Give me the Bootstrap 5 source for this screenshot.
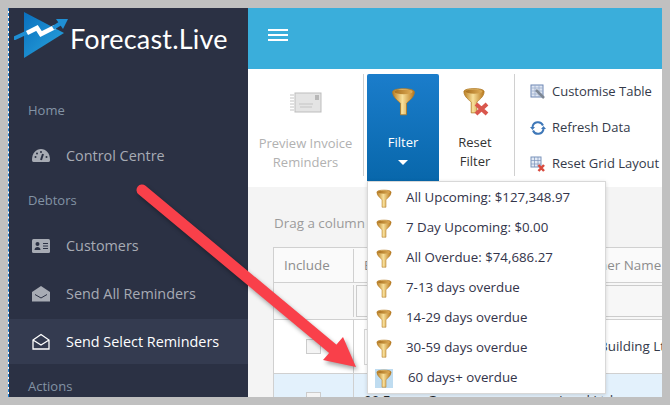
<!DOCTYPE html>
<html lang="en">
<head>
  <meta charset="UTF-8" />
  <title>Forecast.Live</title>
  <link href="https://cdn.jsdelivr.net/npm/bootstrap@5.3.3/dist/css/bootstrap.min.css" rel="stylesheet" />
  <style>
    html, body { width: 670px; height: 405px; overflow: hidden; }
    body { background: #c0c0c0; padding: 8px; font-family: "Open Sans", sans-serif; }
    .app-frame { width: 654px; height: 389px; overflow: hidden; position: relative; background: #fff; }
    .side-bar { width: 240px; flex: none; background: #2b3144; background-clip: padding-box; border-left: 1px dashed #1a7fd4; color: #a7abb4; }
    .brand-row { height: 80px; padding: 3px 0 0 5px; }
    .brand-name { color: #fff; font-family: "Lato", sans-serif; font-size: 27px; line-height: 1; margin-top: 14px; letter-spacing: .2px; }
    .nav-head { height: 45px; font-size: 13px; color: #8393a5; padding-left: 19px; display: flex; align-items: center; }
    .nav-entry { height: 45px; font-size: 14.4px; padding-left: 23px; display: flex; align-items: center; gap: 16px; color: #a7abb4; }
    .nav-entry svg { width: 18px; height: 18px; flex: none; }
    .nav-entry.current { background: #343b50; color: #fff; }
    .nav-entry.tall-row { height: 51px; }
    .top-strip { height: 61px; background: #3aaedb; padding: 21px 0 0 20px; }
    .burger { width: 20px; height: 12px; border-top: 2px solid #fff; border-bottom: 2px solid #fff; position: relative; }
    .burger::after { content: ""; position: absolute; left: 0; right: 0; top: 3px; height: 2px; background: #fff; }
    .tool-strip { height: 118px; background: #fff; padding-top: 5px; flex: none; }
    .tool-btn { font-size: 13px; line-height: 19px; text-align: center; white-space: nowrap; }
    .tool-btn svg { display: block; margin: 0 auto; }
    .tool-btn span { display: block; margin-top: 17px; }
    .preview-btn { width: 116px; color: #b1b1b1; padding-top: 18px; border-right: 1px solid #d0d0d0; height: 102px; }
    .preview-btn span { margin-top: 20px; }
    .filter-btn { width: 72px; height: 107px; margin-left: 3px; background: linear-gradient(#1b7dcb, #0867ab); color: #fff; padding-top: 13px; border-radius: 2px 2px 0 0; }
    .down-tip { width: 0; height: 0; margin: 8px auto 0; border-left: 5px solid transparent; border-right: 5px solid transparent; border-top: 5px solid #fff; }
    .reset-btn { width: 72px; color: #333; padding-top: 13px; }
    .link-stack { border-left: 1px solid #d0d0d0; height: 102px; padding-left: 15px; margin-left: 3px; font-size: 13px; color: #343a4a; white-space: nowrap; }
    .link-stack > div { height: 36px; display: flex; align-items: center; gap: 6px; }
    .link-stack svg { width: 16px; height: 16px; flex: none; }
    .grid-zone { flex: 1; background: #f4f4f4; position: relative; overflow: hidden; }
    .drag-hint { font-size: 13.4px; color: #9b9b9b; position: absolute; left: 26px; top: 26px; white-space: nowrap; }
    .data-grid { position: absolute; left: 25px; top: 60px; width: 500px; background: #fff; border-top: 1px solid #d0d0d0; border-left: 1px solid #d0d0d0; font-size: 13.4px; }
    .grid-row { display: flex; border-bottom: 1px solid #d0d0d0; white-space: nowrap; overflow: hidden; }
    .cell-a { width: 80px; flex: none; border-right: 1px solid #d0d0d0; display: flex; align-items: center; justify-content: center; }
    .cell-b { width: 205px; flex: none; padding-left: 10px; display: flex; align-items: center; }
    .cell-c { flex: 1; color: #343a4a; display: flex; align-items: center; }
    .head-row { height: 35px; background: #fafafa; color: #8d8d8d; padding-top: 1px; }
    .head-row .cell-a { justify-content: flex-start; padding-left: 10px; }
    .head-row .cell-c { color: #8d8d8d; }
    .filter-row { height: 37px; background: #f7f7f7; padding: 2px 0; }
    .filter-row .cell-b { flex: 1; padding-left: 2px; }
    .input-box { height: 32px; width: 100%; background: #f7f7f7; border: 1px solid #ccc; border-right: 0; }
    .tick-box { width: 15px; height: 15px; background: #f4f4f4; border: 1px solid #ccc; }
    .body-row { height: 54px; }
    .ref-box { width: 60px; height: 36px; border: 1px solid #d8d8d8; }
    .pick-row { height: 40px; background: #e3f1fc; align-items: flex-start; }
    .pick-row > div { height: 40px; padding-top: 16px; align-items: flex-start; }
    .pick-row .cell-a { padding-top: 18px; }
    .drop-menu { position: absolute; left: 359px; top: 173px; width: 239px; height: 213px; background: #fff; border: 1px solid #d8d8d8; box-shadow: 0 1px 4px rgba(0,0,0,.15); padding: 1px 0 0 7px; color: #33344a; font-size: 13.3px; z-index: 2; }
    .drop-entry { height: 30px; display: flex; align-items: center; gap: 13px; white-space: nowrap; }
    .drop-entry svg { width: 18px; height: 19px; flex: none; }
    .drop-entry.hot { gap: 15px; }
    .drop-entry.hot svg { background: #bfdcf0; }
    .big-arrow { position: absolute; left: -8px; top: -8px; z-index: 3; filter: drop-shadow(2px 3px 2px rgba(0,0,0,.35)); }
  </style>
</head>
<body>
  <svg width="0" height="0" class="position-absolute">
    <defs>
      <linearGradient id="gold" x1="0" x2="1" y1="0" y2="0">
        <stop offset="0" stop-color="#b97c20"/><stop offset=".45" stop-color="#f8e09a"/><stop offset="1" stop-color="#b8761a"/>
      </linearGradient>
      <linearGradient id="goldIn" x1="0" x2="1" y1="0" y2="0">
        <stop offset="0" stop-color="#a8701f"/><stop offset="1" stop-color="#e0ae58"/>
      </linearGradient>
      <linearGradient id="logoBlue" x1="0" x2="1" y1="0" y2="1">
        <stop offset="0" stop-color="#0a6fbd"/><stop offset="1" stop-color="#2aa6df"/>
      </linearGradient>
      <symbol id="funnel" viewBox="0 0 20 24">
        <path d="M1 4C1 .5 19 .5 19 4 19 9 13.500 12 12.500 13.500V23H7.500V13.500C6.500 12 1 9 1 4Z" fill="url(#gold)" stroke="#b07a28" stroke-width=".7"/>
        <ellipse cx="10" cy="4" rx="7.500" ry="2" fill="url(#goldIn)"/>
      </symbol>
    </defs>
  </svg>
  <div class="app-frame d-flex">
    <aside class="side-bar">
      <div class="brand-row d-flex">
        <svg width="56" height="50" viewBox="0 0 56 50">
          <path d="M10 1 50 22 10 47Z" fill="url(#logoBlue)"/>
          <path d="M1 27 14 21" fill="none" stroke="#1f8fd4" stroke-width="4" stroke-linecap="round"/>
          <path d="M13 22 23 17 27 23 41 16" fill="none" stroke="#fff" stroke-width="4.500"/>
          <path d="M39 17 47 12" fill="none" stroke="#1f8fd4" stroke-width="4"/>
          <path d="M42 8 54 8 49 18Z" fill="#1f8fd4"/>
        </svg>
        <div class="brand-name">Forecast.Live</div>
      </div>
      <div class="nav-head">Home</div>
      <div class="nav-entry">
        <svg viewBox="0 0 18 18"><path d="M0 13C0 6 4 2 9 2s9 4 9 11c0 1-.5 2-1.500 2H1.500C.5 15 0 14 0 13Z" fill="#a7abb4"/><path d="M9 13 11 7" stroke="#2b3144" stroke-width="2"/><g fill="#2b3144"><circle cx="3.500" cy="10" r="1"/><circle cx="5" cy="6.500" r="1"/><circle cx="9" cy="5" r="1"/><circle cx="14.500" cy="10" r="1"/></g></svg>
        <span>Control Centre</span>
      </div>
      <div class="nav-head">Debtors</div>
      <div class="nav-entry">
        <svg viewBox="0 0 18 18"><rect x="0" y="2" width="18" height="14" rx="1.500" fill="#a7abb4"/><circle cx="5.500" cy="7" r="2" fill="#2b3144"/><path d="M2.500 13c0-4 6-4 6 0Z" fill="#2b3144"/><path d="M11 6.500h5M11 9h5M11 11.500h5" stroke="#2b3144" stroke-width="1"/></svg>
        <span>Customers</span>
      </div>
      <div class="nav-entry tall-row">
        <svg viewBox="0 0 18 18"><path d="M0 7 9 1l9 6v9.500H0Z" fill="#a7abb4"/><path d="M3 9.500 9 13l6-3.500" fill="none" stroke="#2b3144" stroke-width="1"/></svg>
        <span>Send All Reminders</span>
      </div>
      <div class="nav-entry current">
        <svg viewBox="0 0 18 18"><path d="M1 7 9 1.500 17 7v9H1ZM1 7l8 5 8-5" fill="none" stroke="#fff" stroke-width="1.300"/></svg>
        <span>Send Select Reminders</span>
      </div>
      <div class="nav-head">Actions</div>
    </aside>
    <main class="flex-fill d-flex flex-column">
      <div class="top-strip"><div class="burger"></div></div>
      <div class="tool-strip d-flex">
        <div class="tool-btn preview-btn">
          <svg width="32" height="22" viewBox="0 0 32 22"><rect x="5" y="1" width="26" height="19" fill="#e4e4e4" stroke="#bdbdbd"/><rect x="25" y="3" width="4" height="5" fill="#b8b8b8"/><path d="M9 12h14M10 15h12M0 3h4M0 6h4M0 9h4M0 12h4M0 15h4M0 18h4" stroke="#c4c4c4"/></svg>
          <span>Preview Invoice<br>Reminders</span>
        </div>
        <div class="tool-btn filter-btn">
          <svg width="25" height="29"><use href="#funnel"/></svg>
          <span>Filter</span>
          <div class="down-tip"></div>
        </div>
        <div class="tool-btn reset-btn">
          <svg width="27" height="29" viewBox="0 0 27 29"><use href="#funnel" width="24" height="27" x="0" y="0"/><path d="M14 17 25 27M25 17 14 27" stroke="#d9574d" stroke-width="4"/></svg>
          <span>Reset<br>Filter</span>
        </div>
        <div class="link-stack">
          <div><svg viewBox="0 0 16 16"><rect x="1" y="1" width="12" height="12" fill="#dfe6f2" stroke="#6d86b4"/><path d="M1 4h12M1 7h12M1 10h12M5 1v12M9 1v12" stroke="#9aaccc" stroke-width=".8"/><path d="M6 6 14 14" stroke="#7d8794" stroke-width="2.500"/></svg><span>Customise Table</span></div>
          <div><svg viewBox="0 0 16 16"><path d="M2.500 7A5.500 5.500 0 0 1 13 5.500M13.500 9A5.500 5.500 0 0 1 3 10.500" fill="none" stroke="#3f78b8" stroke-width="2"/><path d="M0 7h5L2.500 10ZM16 9h-5l2.500-3Z" fill="#3f78b8"/></svg><span>Refresh Data</span></div>
          <div><svg viewBox="0 0 16 16"><rect x="1" y="1" width="10" height="10" fill="#e3eaf5" stroke="#7b93bb"/><path d="M1 4.500h10M1 8h10M4.500 1v10M8 1v10" stroke="#7b93bb" stroke-width=".7"/><path d="M8.500 9 14 15M14 9 8.500 15" stroke="#d84a3e" stroke-width="2.500"/></svg><span>Reset Grid Layout</span></div>
        </div>
      </div>
      <div class="grid-zone">
        <div class="drag-hint">Drag a column</div>
        <div class="data-grid">
          <div class="grid-row head-row"><div class="cell-a">Include</div><div class="cell-b">E</div><div class="cell-c">Customer Name</div></div>
          <div class="grid-row filter-row"><div class="cell-a"></div><div class="cell-b"><div class="input-box"></div></div></div>
          <div class="grid-row body-row"><div class="cell-a"><div class="tick-box"></div></div><div class="cell-b"><div class="ref-box"></div></div><div class="cell-c">Acorn Building Ltd</div></div>
          <div class="grid-row pick-row"><div class="cell-a"><div class="tick-box"></div></div><div class="cell-b">00 Forum Group</div><div class="cell-c">Land Ltd</div></div>
        </div>
      </div>
    </main>
    <div class="drop-menu">
      <div class="drop-entry"><svg><use href="#funnel"/></svg><span>All Upcoming: $127,348.97</span></div>
      <div class="drop-entry"><svg><use href="#funnel"/></svg><span>7 Day Upcoming: $0.00</span></div>
      <div class="drop-entry"><svg><use href="#funnel"/></svg><span>All Overdue: $74,686.27</span></div>
      <div class="drop-entry"><svg><use href="#funnel"/></svg><span>7-13 days overdue</span></div>
      <div class="drop-entry"><svg><use href="#funnel"/></svg><span>14-29 days overdue</span></div>
      <div class="drop-entry"><svg><use href="#funnel"/></svg><span>30-59 days overdue</span></div>
      <div class="drop-entry hot"><svg><use href="#funnel"/></svg><span>60 days+ overdue</span></div>
    </div>
    <svg class="big-arrow" width="670" height="405" viewBox="0 0 670 405">
      <path d="M142 190 333 349" stroke="#f9404a" stroke-width="11" stroke-linecap="round"/>
      <path d="M356 367 323 360 343 337Z" fill="#f9404a"/>
    </svg>
  </div>
  <script src="https://cdn.jsdelivr.net/npm/bootstrap@5.3.3/dist/js/bootstrap.bundle.min.js"></script>
</body>
</html>
